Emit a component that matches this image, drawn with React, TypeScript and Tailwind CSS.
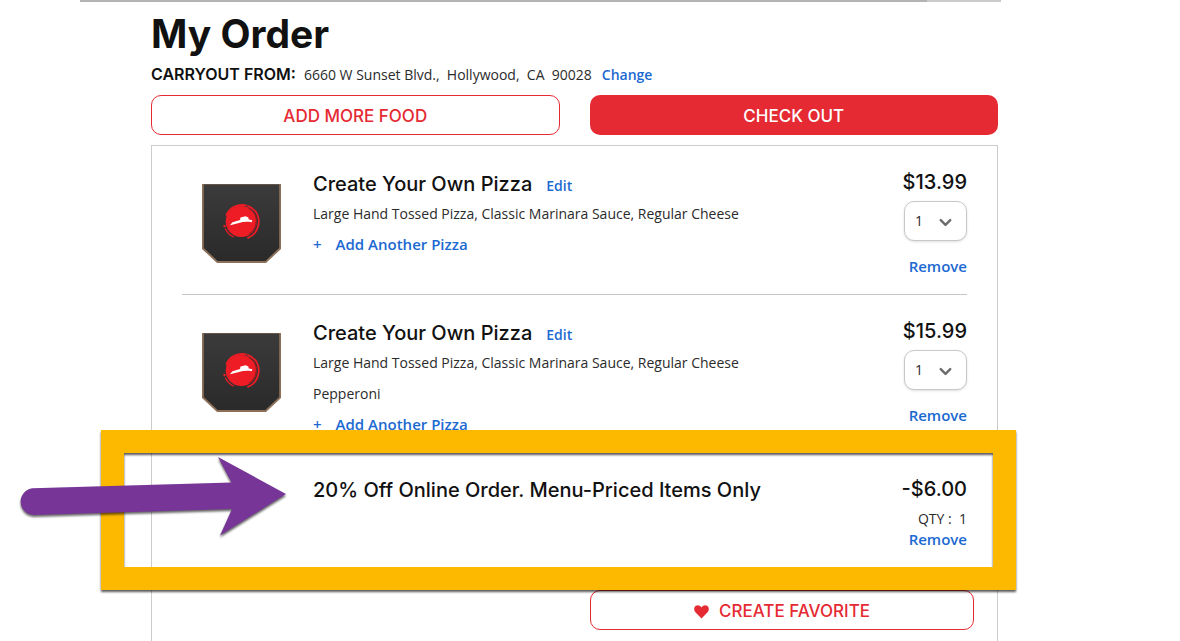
import { ChevronDown } from "lucide-react";

interface OrderItem {
  id: string;
  name: string;
  details: string[];
  price: string;
  quantity: number;
}

const items: OrderItem[] = [
  {
    id: "pizza-1",
    name: "Create Your Own Pizza",
    details: ["Large Hand Tossed Pizza, Classic Marinara Sauce, Regular Cheese"],
    price: "$13.99",
    quantity: 1,
  },
  {
    id: "pizza-2",
    name: "Create Your Own Pizza",
    details: [
      "Large Hand Tossed Pizza, Classic Marinara Sauce, Regular Cheese",
      "Pepperoni",
    ],
    price: "$15.99",
    quantity: 1,
  },
];

const PizzaBox = () => (
  <svg viewBox="0 0 79 79" className="h-[79px] w-[79px]" aria-hidden="true">
    <defs>
      <linearGradient id="box" x1="0" y1="0" x2="0" y2="1">
        <stop offset="0" stopColor="#3b3b3b" />
        <stop offset="1" stopColor="#2a2a2a" />
      </linearGradient>
    </defs>
    <path d="M0 0H79V65L64 79H15L0 65Z" fill="#8c7059" />
    <path d="M1.8 0.5H77.2V64L63.4 77H15.6L1.8 64Z" fill="url(#box)" />
    <circle cx="39.3" cy="37.5" r="15.6" fill="#ee1c25" />
    <path
      d="M24.500 31C28 23 36 19.8 44 21.4M46 22.2C54 25 58.3 33 56.4 41C55 47.500 51 52 46 53.800"
      fill="none"
      stroke="#ee1c25"
      strokeWidth="1.8"
      strokeLinecap="round"
    />
    <path
      d="M23.500 45C25 48.500 28 51.500 31.500 53"
      fill="none"
      stroke="#ee1c25"
      strokeWidth="1.2"
      strokeLinecap="round"
    />
    <path d="M21.200 41.200L23.200 40.800L23.800 43L21.800 43.600Z" fill="#ee1c25" />
    <path
      d="M46.500 24.500C53 27.500 55.500 34 53.800 40.500C52.800 44.500 50.500 48 47 50.200"
      fill="none"
      stroke="#7d1c20"
      strokeWidth="1"
    />
    <path
      d="M28.300 40.800L30.500 38.200L38 36L38.500 33.500L43.600 32.200L46.300 33.600L46.800 35.500L50.300 36.300L49.800 38.300C45 37.400 41 37.900 37 39L28.300 41.200Z"
      fill="#fff"
    />
  </svg>
);

const OrderRow = ({ item, divider }: { item: OrderItem; divider: boolean }) => (
  <li className={divider ? "flex border-b border-[#c6c6c6]" : "flex"}>
    <div className="shrink-0 pt-[38px] pl-5">
      <PizzaBox />
    </div>
    <div className="ml-8 min-w-0 flex-1 pt-6 pb-3">
      <div className="flex items-baseline gap-3.5 leading-7">
        <h2 className="font-[Inter,sans-serif] text-xl leading-7 font-medium">
          {item.name}
        </h2>
        <a href="#edit" className="text-sm font-semibold text-[#1c69d1]">
          Edit
        </a>
      </div>
      {item.details.map((line) => (
        <p key={line} className="text-sm leading-[31px] text-[#2b2b2b]">
          {line}
        </p>
      ))}
      <button
        type="button"
        className="flex gap-3.5 text-[15px] leading-[31px] font-semibold text-[#1c69d1]"
      >
        <span>+</span>
        <span>Add Another Pizza</span>
      </button>
    </div>
    <div className="flex shrink-0 flex-col items-end pt-[22px] pb-[18px]">
      <p className="font-[Inter,sans-serif] text-xl leading-7 font-medium">
        {item.price}
      </p>
      <div className="relative mt-[5px]">
        <select
          aria-label={`Quantity of ${item.name}`}
          defaultValue={item.quantity}
          className="h-10 w-[63px] appearance-none rounded-[10px] border border-[#c8c8c8] bg-white pl-2.5 text-sm text-[#2b2b2b] shadow-sm"
        >
          <option>1</option>
          <option>2</option>
          <option>3</option>
        </select>
        <ChevronDown
          className="pointer-events-none absolute top-3 right-3 h-[19px] w-[19px] text-[#6b6b6b]"
          strokeWidth={3}
        />
      </div>
      <button
        type="button"
        className="mt-[15px] text-[15px] leading-5 font-semibold text-[#1c69d1]"
      >
        Remove
      </button>
    </div>
  </li>
);

// Marker frame and arrow drawn over the discount line
const Callout = () => (
  <div className="pointer-events-none" aria-hidden="true">
    <div className="absolute -top-[22px] -right-[49px] -bottom-6 -left-[81px] border-[23px] border-[#fcb900] drop-shadow-[0_2px_1px_rgba(0,0,0,0.65)]" />
    <svg
      viewBox="0 0 290 100"
      className="absolute -top-0.5 -left-[172px] h-[100px] w-[290px] drop-shadow-[0_2px_1px_rgba(0,0,0,0.6)]"
    >
      <path
        d="M22.500 38.300L221.500 32.500L208 7L276 44L210 85.500L222 59L23.500 65A13.400 13.400 0 0 1 22.500 38.300Z"
        fill="#773697"
      />
    </svg>
  </div>
);

const DiscountRow = () => (
  <li className="relative flex">
    <h2 className="ml-[131px] min-w-0 flex-1 pt-6 font-[Inter,sans-serif] text-xl leading-7 font-medium">
      20% Off Online Order. Menu-Priced Items Only
    </h2>
    <div className="flex shrink-0 flex-col items-end pt-[23px] pb-[17px]">
      <p className="font-[Inter,sans-serif] text-xl leading-7 font-medium">
        -$6.00
      </p>
      <p className="mt-1.5 text-sm leading-5 whitespace-pre text-[#2b2b2b]">
        QTY :  1
      </p>
      <button
        type="button"
        className="text-[15px] leading-5 font-semibold text-[#1c69d1]"
      >
        Remove
      </button>
    </div>
    <Callout />
  </li>
);

export default function App() {
  return (
    <div className="overflow-hidden bg-white pr-[179px] pl-20 font-['Open_Sans',sans-serif] text-[#111]">
      <div className="flex h-[2px] bg-[#b3b3b3]">
        <div className="ml-auto w-[74px] bg-[#cacaca]" />
      </div>
      <main className="pr-[3px] pl-[71px]">
        <h1 className="mt-2 font-[Inter,sans-serif] text-[39px] leading-[48px] font-bold">
          My Order
        </h1>
        <div className="mt-1 flex items-baseline leading-6">
          <span className="font-[Inter,sans-serif] text-base leading-6 font-semibold">
            CARRYOUT FROM:
          </span>
          <span className="ml-2 text-sm leading-6 whitespace-pre text-[#2b2b2b]">
            6660 W Sunset Blvd.,  Hollywood,  CA  90028
          </span>
          <a
            href="#change"
            className="ml-2.5 text-sm leading-6 font-semibold text-[#1c69d1]"
          >
            Change
          </a>
        </div>

        <div className="mt-2 grid grid-cols-2 gap-[30px] font-[Inter,sans-serif] text-[17px] font-medium">
          <button
            type="button"
            className="h-10 rounded-[10px] border border-[#e52a33] pt-1 text-[#e52a33]"
          >
            ADD MORE FOOD
          </button>
          <button
            type="button"
            className="h-10 rounded-[10px] bg-[#e52a33] pt-1 text-white"
          >
            CHECK OUT
          </button>
        </div>

        <section className="mt-2.5 border-x border-t border-[#ccc] pb-3">
          <ul className="px-[30px]">
            {items.map((item, i) => (
              <OrderRow
                key={item.id}
                item={item}
                divider={i < items.length - 1}
              />
            ))}
            <DiscountRow />
          </ul>
          <div className="mt-6 flex justify-end pr-[23px]">
            <button
              type="button"
              className="flex h-10 w-96 items-center justify-center gap-2.5 rounded-[10px] border border-[#e52a33] pt-1 font-[Inter,sans-serif] text-[17px] font-medium text-[#e52a33]"
            >
              <svg viewBox="0 0 15 14" className="h-3.5 w-[15px]" aria-hidden="true">
                <path
                  d="M7.500 13.500L1.400 7.200C-0.400 5.300 -0.100 2.400 1.600 1.100C3.400 -0.300 6 0.200 7.500 2.400C9 0.200 11.600 -0.300 13.400 1.100C15.100 2.400 15.400 5.300 13.600 7.200Z"
                  fill="currentColor"
                />
              </svg>
              CREATE FAVORITE
            </button>
          </div>
        </section>
      </main>
    </div>
  );
}
